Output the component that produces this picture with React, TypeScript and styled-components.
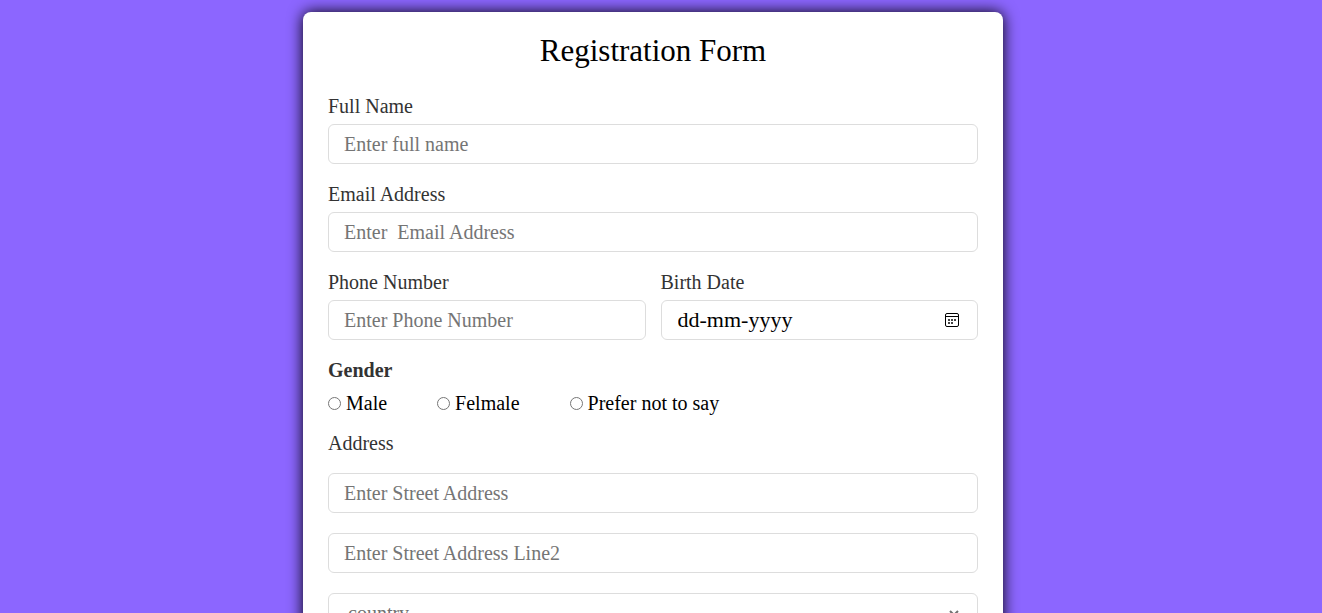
import React from "react";
import styled, { createGlobalStyle } from "styled-components";

const GlobalStyle = createGlobalStyle`
  * { box-sizing: border-box; }
  body {
    margin: 0;
    background: #8c66ff;
    font-family: "Liberation Serif", serif;
  }
`;

const Page = styled.main`
  display: flex;
  justify-content: center;
  padding: 12px 16px 12px 0;
`;

const Card = styled.form`
  display: flex;
  flex-direction: column;
  gap: 20px;
  width: 100%;
  max-width: 700px;
  padding: 24px 25px;
  border-radius: 8px;
  background: #fff;
  box-shadow: 0 0 15px #000;
`;

const Title = styled.h1`
  margin: 0 0 10px;
  font-size: 31px;
  line-height: 30px;
  font-weight: 400;
  text-align: center;
  color: #000;
`;

const Field = styled.div`
  display: flex;
  flex-direction: column;
  gap: 8px;
  flex: 1;
  min-width: 0;
`;

const Label = styled.label`
  font-size: 20px;
  line-height: 20px;
  color: #333;
`;

const Columns = styled.div`
  display: flex;
  gap: 15px;
`;

const Input = styled.input<{ $dark?: boolean }>`
  width: 100%;
  height: 40px;
  padding: 0 15px;
  border: 1px solid #ddd;
  border-radius: 6px;
  outline: none;
  background: #fff;
  font-family: inherit;
  font-size: 20px;
  color: #000;
  &::placeholder {
    color: ${(p) => (p.$dark ? "#000" : "#757575")};
    opacity: 1;
    white-space: pre;
  }
`;

const DateBox = styled.div`
  display: flex;
  align-items: center;
  height: 40px;
  padding: 0 17px 0 16px;
  border: 1px solid #ddd;
  border-radius: 6px;
`;

const DateInput = styled(Input)`
  flex: 1;
  min-width: 0;
  height: 38px;
  padding: 0;
  border: 0;
  font-size: 22px;
`;

const IconButton = styled.button`
  display: flex;
  padding: 0;
  border: 0;
  background: none;
  cursor: pointer;
`;

const Group = styled.fieldset`
  margin: 0;
  padding: 0;
  border: 0;
  min-width: 0;
`;

const Legend = styled.legend<{ $bold?: boolean }>`
  padding: 0;
  font-size: 20px;
  line-height: 20px;
  font-weight: ${(p) => (p.$bold ? 700 : 400)};
  color: #333;
`;

const Options = styled.div`
  display: flex;
  flex-wrap: wrap;
  gap: 8px 50px;
  padding-top: 13px;
`;

const Option = styled.label`
  display: flex;
  align-items: center;
  gap: 5px;
  font-size: 20px;
  line-height: 20px;
  color: #000;
`;

const Radio = styled.input`
  width: 13px;
  height: 13px;
  margin: 0;
`;

const Lines = styled.div`
  display: flex;
  flex-direction: column;
  gap: 20px;
  padding-top: 20px;
`;

const SelectBox = styled.div`
  display: flex;
  height: 40px;
  padding: 0 15px;
  border: 1px solid #ddd;
  border-radius: 6px;
`;

const Select = styled.select`
  width: 100%;
  border: 0;
  outline: none;
  background: #fff;
  font-family: inherit;
  font-size: 20px;
  color: #707070;
`;

const CalendarIcon = () => (
  <svg width="16" height="16" viewBox="0 0 16 16" aria-hidden="true">
    <rect x="1.5" y="1.5" width="13" height="13" rx="1.5" fill="none" stroke="#000" />
    <path d="M2 4.5h12" stroke="#000" />
    <path
      d="M4 7h2v2H4zM7 7h2v2H7zM10 7h2v2h-2zM4 10h2v2H4zM7 10h2v2H7z"
      fill="#444"
    />
  </svg>
);

const genders = ["Male", "Felmale", "Prefer not to say"];

export default function App() {
  return (
    <>
      <GlobalStyle />
      <Page>
        <Card>
          <Title>Registration Form</Title>
          <Field>
            <Label htmlFor="name">Full Name</Label>
            <Input id="name" type="text" placeholder="Enter full name" />
          </Field>
          <Field>
            <Label htmlFor="email">Email Address</Label>
            <Input id="email" type="email" placeholder="Enter  Email Address" />
          </Field>
          <Columns>
            <Field>
              <Label htmlFor="phone">Phone Number</Label>
              <Input id="phone" type="tel" placeholder="Enter Phone Number" />
            </Field>
            <Field>
              <Label htmlFor="birth">Birth Date</Label>
              <DateBox>
                <DateInput $dark id="birth" type="text" placeholder="dd-mm-yyyy" />
                <IconButton type="button" aria-label="Open calendar">
                  <CalendarIcon />
                </IconButton>
              </DateBox>
            </Field>
          </Columns>
          <Group>
            <Legend $bold>Gender</Legend>
            <Options>
              {genders.map((g) => (
                <Option key={g}>
                  <Radio type="radio" name="gender" value={g} />
                  {g}
                </Option>
              ))}
            </Options>
          </Group>
          <Group>
            <Legend>Address</Legend>
            <Lines>
              <Input type="text" aria-label="Street address" placeholder="Enter Street Address" />
              <Input type="text" aria-label="Street address line 2" placeholder="Enter Street Address Line2" />
              <SelectBox>
                <Select aria-label="Country" defaultValue="country">
                  <option>country</option>
                </Select>
              </SelectBox>
            </Lines>
          </Group>
        </Card>
      </Page>
    </>
  );
}
